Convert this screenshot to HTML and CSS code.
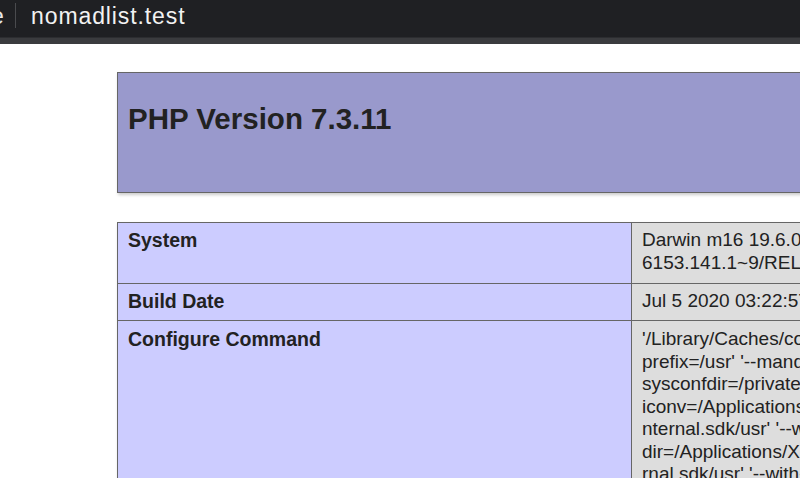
FILE: index.html
```html
<!DOCTYPE html>
<html>
<head>
<meta charset="utf-8">
<link rel="stylesheet" href="styles.css">
</head>
<body>
<div class="topbar">
  <span class="prev">e</span>
  <span class="sep"></span>
  <span class="url">nomadlist.test</span>
</div>
<div class="strip"></div>
<div class="page">
  <div class="header">
    <h1 class="title">PHP Version 7.3.11</h1>
  </div>
  <table class="info">
    <tr class="r-system">
      <td class="e">System</td>
      <td class="v">Darwin m16 19.6.0 Darwin Kernel Version 19.6.0: Thu Jun 18 20:49:00 PDT 2020; root:xnu-<br>6153.141.1~9/RELEASE_X86_64 x86_64</td>
    </tr>
    <tr class="r-date">
      <td class="e">Build Date</td>
      <td class="v">Jul 5 2020 03:22:57</td>
    </tr>
    <tr class="r-conf">
      <td class="e">Configure Command</td>
      <td class="v">
        <span class="ln">'/Library/Caches/com.apple.xbs/Sources/apache_mod_php/apache_mod_php-</span>
        <span class="ln">prefix=/usr' '--mandir=/usr/share/man' '--infodir=/usr/share/info' '--</span>
        <span class="ln">sysconfdir=/private/etc' '--with-libdir=lib' '--enable-cli' '--with-</span>
        <span class="ln">iconv=/Applications/Xcode.app/Contents/Developer/Platforms/MacOSX.platform/Developer/SDKs/MacOSX.I</span>
        <span class="ln">nternal.sdk/usr' '--with-config-file-path=/etc' '--with-config-file-scan-</span>
        <span class="ln">dir=/Applications/Xcode.app/Contents/Developer/Platforms/MacOSX.platform/Developer/SDKs/MacOSX.Inte</span>
        <span class="ln">rnal.sdk/usr' '--with-libxml-dir=/usr' '--with-openssl=/usr/local/libressl'</span>
      </td>
    </tr>
  </table>
</div>
</body>
</html>
```

FILE: styles.css
```css
html, body {
  margin: 0;
  padding: 0;
  background: #ffffff;
  overflow: hidden;
  height: 478px;
}
body {
  font-family: "Liberation Sans", Arial, sans-serif;
  color: #222222;
}
.topbar {
  height: 37px;
  background: #1f2023;
  display: flex;
  align-items: center;
  position: relative;
}
.prev {
  color: #e8e8e8;
  font-size: 23px;
  margin-left: -9px;
  width: 14px;
  overflow: hidden;
  position: relative;
  top: -2px;
}
.sep {
  width: 1px;
  height: 25px;
  background: #4a4b4e;
  margin-left: 10px;
  position: relative;
  top: -3px;
}
.url {
  color: #f2f2f2;
  font-size: 23px;
  margin-left: 15px;
  letter-spacing: 0.9px;
  position: relative;
  top: -2px;
}
.strip {
  height: 6px;
  background: #3a3b3e;
  border-top: 1px solid #2c2d30;
}
.page {
  margin-left: 117px;
  width: 940px;
  padding-top: 28px;
}
.header {
  background: #9999cc;
  border: 1px solid #666666;
  height: 119px;
  box-shadow: 1px 2px 3px #cccccc;
  padding: 0 10px;
}
.title {
  margin: 0;
  font-size: 29.5px;
  font-weight: bold;
  color: #222222;
  padding-top: 29px;
  line-height: 34px;
}
.info {
  margin-top: 29px;
  border-collapse: collapse;
  width: 940px;
  box-shadow: 1px 2px 3px #cccccc;
}
.info td {
  border: 1px solid #666666;
  font-size: 19px;
  line-height: 22.5px;
  vertical-align: top;
  padding: 6px 9px 5px 10px;
}
.info .e {
  background: #ccccff;
  font-weight: bold;
  font-size: 19.5px;
  width: 494px;
}
.info .v {
  background: #dddddd;
  white-space: nowrap;
  overflow: hidden;
  max-width: 400px;
}
.r-system td { height: 49px; }
.r-date td { height: 25px; }
.r-conf td { height: 200px; padding-top: 7px; }
.ln { display: block; }
```
